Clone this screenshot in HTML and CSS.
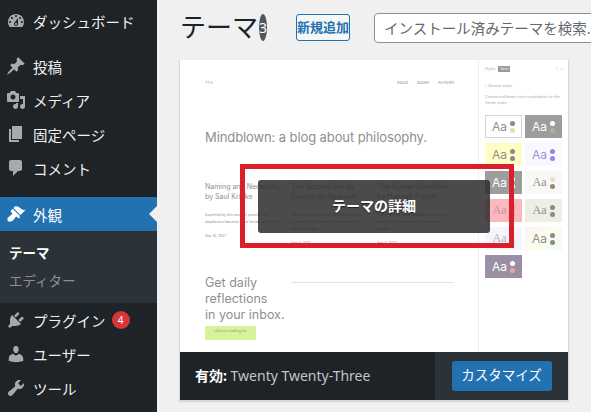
FILE: index.html
```html
<!DOCTYPE html>
<html lang="ja">
<head>
    <meta charset="utf-8">
    <title>テーマ</title>
    <link rel="stylesheet" href="styles.css">
</head>
<body>
    <div class="sidebar">
        <a class="menu-item first">
            <svg class="menu-icon" viewBox="0 0 20 20"><path d="M3.76 16h12.48c1.1-1.37 1.76-3.11 1.76-5 0-4.42-3.58-8-8-8s-8 3.58-8 8c0 1.89.66 3.63 1.76 5zM10 4c.55 0 1 .45 1 1s-.45 1-1 1-1-.45-1-1 .45-1 1-1zM6 6c.55 0 1 .45 1 1s-.45 1-1 1-1-.45-1-1 .45-1 1-1zm8 0c.55 0 1 .45 1 1s-.45 1-1 1-1-.45-1-1 .45-1 1-1zm-5.37 5.55L12 7v6c0 1.1-.9 2-2 2s-2-.9-2-2c0-.57.24-1.08.63-1.45zM4 10c.55 0 1 .45 1 1s-.45 1-1 1-1-.45-1-1 .45-1 1-1zm12 0c.55 0 1 .45 1 1s-.45 1-1 1-1-.45-1-1 .45-1 1-1zm-5 3c0-.55-.45-1-1-1s-1 .45-1 1 .45 1 1 1 1-.45 1-1z"/></svg>
            <span>ダッシュボード</span>
        </a>
        <a class="menu-item group-start">
            <svg class="menu-icon" viewBox="0 0 20 20"><path d="M10.44 3.02l1.82-1.82 6.36 6.35-1.83 1.82c-1.05-.68-2.48-.57-3.41.36l-.75.75c-.92.93-1.04 2.35-.35 3.41l-1.83 1.82-2.41-2.41-2.8 2.79c-.42.42-3.38 2.71-3.8 2.29s1.86-3.39 2.28-3.81l2.79-2.79L4.1 9.36l1.83-1.82c1.05.69 2.48.57 3.4-.36l.75-.75c.93-.92 1.05-2.35.36-3.41z"/></svg>
            <span>投稿</span>
        </a>
        <a class="menu-item">
            <svg class="menu-icon" viewBox="0 0 20 20"><path d="M13 11V4c0-.55-.45-1-1-1h-1.67L9 1H5L3.67 3H2c-.55 0-1 .45-1 1v7c0 .55.45 1 1 1h10c.55 0 1-.45 1-1zM7 4.5c1.38 0 2.5 1.12 2.5 2.5S8.38 9.5 7 9.5 4.5 8.38 4.5 7 5.62 4.5 7 4.5zM14 6h5v10.5c0 1.38-1.12 2.5-2.5 2.5S14 17.88 14 16.5s1.12-2.5 2.5-2.5c.17 0 .34.02.5.05V9h-3V6zm-4 8.05V13h2v3.5c0 1.38-1.12 2.5-2.5 2.5S7 17.88 7 16.5 8.12 14 9.5 14c.17 0 .34.02.5.05z"/></svg>
            <span>メディア</span>
        </a>
        <a class="menu-item">
            <svg class="menu-icon" viewBox="0 0 20 20"><path d="M6 15V2h10v13H6zm-1 1h8v2H3V5h2v11z"/></svg>
            <span>固定ページ</span>
        </a>
        <a class="menu-item">
            <svg class="menu-icon" viewBox="0 0 20 20"><path d="M5 2h9c1.1 0 2 .9 2 2v7c0 1.1-.9 2-2 2h-2l-5 5v-5H5c-1.1 0-2-.9-2-2V4c0-1.1.9-2 2-2z"/></svg>
            <span>コメント</span>
        </a>
        <a class="menu-item current">
            <svg class="menu-icon" viewBox="0 0 20 20"><path d="M14.48 11.06L7.41 3.99l1.5-1.5c.5-.56 2.3-.47 3.51.32 1.21.8 1.43 1.28 2.91 2.1 1.18.64 2.45 1.26 4.45.85zm-.71.71L6.7 4.7 4.93 6.47c-.39.39-.39 1.02 0 1.41l1.06 1.06c.39.39.39 1.03 0 1.42-.6.6-1.43 1.11-2.21 1.69-.35.26-.7.53-1.01.84C1.43 13.23.78 15.78 2 17s3.78.56 5.14-.78c.31-.31.58-.66.84-1.01.58-.78 1.09-1.61 1.69-2.21.39-.39 1.02-.39 1.41 0l1.06 1.06c.39.39 1.02.39 1.41 0z"/></svg>
            <span>外観</span>
        </a>
        <div class="submenu">
            <a class="submenu-item active">テーマ</a>
            <a class="submenu-item">エディター</a>
        </div>
        <a class="menu-item">
            <svg class="menu-icon" viewBox="0 0 20 20"><path d="M13.11 4.36L9.87 7.6 8 5.73l3.24-3.24c.35-.34 1.05-.2 1.56.32.52.51.66 1.21.31 1.55zm-8 1.77l.91-1.12 9.01 9.01-1.19.84c-.71.71-2.63 1.16-3.82 1.16H6.14L4.9 17.26c-.59.59-1.54.59-2.12 0-.59-.58-.59-1.53 0-2.12l1.24-1.24v-3.88c0-1.13.4-3.19 1.09-3.89zm7.26 3.97l3.24-3.24c.34-.35 1.04-.21 1.55.31.52.51.66 1.21.31 1.55l-3.24 3.25z"/></svg>
            <span>プラグイン</span>
            <span class="update-count">4</span>
        </a>
        <a class="menu-item">
            <svg class="menu-icon" viewBox="0 0 20 20"><path d="M10 9.25c-2.27 0-2.73-3.44-2.73-3.44C7 4.02 7.82 2 9.97 2c2.16 0 2.98 2.02 2.71 3.81 0 0-.41 3.44-2.68 3.44zm0 2.57L12.72 10c2.39 0 4.52 2.33 4.52 4.53v2.49s-3.65 1.13-7.24 1.13c-3.65 0-7.24-1.13-7.24-1.13v-2.49c0-2.25 1.94-4.48 4.47-4.48z"/></svg>
            <span>ユーザー</span>
        </a>
        <a class="menu-item">
            <svg class="menu-icon" viewBox="0 0 20 20"><path d="M16.68 9.77c-1.34 1.34-3.3 1.67-4.95.99l-5.41 6.52c-.99.99-2.59.99-3.58 0s-.99-2.59 0-3.57l6.52-5.42c-.68-1.65-.35-3.61.99-4.95 1.28-1.28 3.12-1.62 4.72-1.06l-2.89 2.89 2.82 2.82 2.86-2.87c.53 1.58.18 3.39-1.08 4.67z"/></svg>
            <span>ツール</span>
        </a>
    </div>

    <div class="content">
        <div class="page-head">
            <h1 class="page-title">テーマ</h1>
            <span class="title-count">3</span>
            <a class="add-new">新規追加</a>
            <div class="search-box">インストール済みテーマを検索...</div>
        </div>

        <div class="theme-card">
            <div class="theme-shot">
                <div class="shot-main">
                    <div class="shot-nav">
                        <span class="shot-logo">TT3</span>
                        <span class="shot-links"><span>About</span><span>Books</span><span>All Posts</span></span>
                    </div>
                    <div class="shot-tagline">Mindblown: a blog about philosophy.</div>
                    <div class="shot-posts">
                        <div class="shot-post">
                            <div class="post-title">Naming and Necessity by Saul Kripke</div>
                            <p class="post-text">Inspirited by this wind of promise, my daydreams become more fervent and vivid.</p>
                            <div class="post-date">Sep 10, 2021</div>
                        </div>
                        <div class="shot-post">
                            <div class="post-title">The Second Sex by Simone de Beauvoir</div>
                            <p class="post-text">I feel a cold northern breeze play upon my cheeks, which braces my nerves and fills me with delight.</p>
                            <div class="post-date">Sep 4, 2021</div>
                        </div>
                        <div class="shot-post">
                            <div class="post-title">The Human Condition by Hannah Arendt</div>
                            <p class="post-text">I try in vain to be persuaded that the pole is anything but the region of beauty and delight.</p>
                            <div class="post-date">Sep 4, 2021</div>
                        </div>
                    </div>
                    <div class="shot-signup">
                        <div class="signup-text">Get daily<br>reflections<br>in your inbox.</div>
                        <div class="signup-rule"></div>
                    </div>
                    <span class="signup-btn">Join our mailing list</span>
                </div>

                <div class="shot-styles">
                    <div class="styles-head"><span>Styles</span><span class="beta">Beta</span><span class="styles-close">⋮ &nbsp;×</span></div>
                    <div class="styles-back">‹ &nbsp;Browse styles</div>
                    <p class="styles-note">Choose a different style combination for the theme styles</p>
                    <div class="styles-grid">
                        <div class="swatch sw-white">Aa<i class="dots"><b class="d-grey"></b><b class="d-lime"></b></i></div>
                        <div class="swatch sw-grey">Aa<i class="dots"><b class="d-white"></b><b class="d-tan"></b></i></div>
                        <div class="swatch sw-yellow">Aa<i class="dots"><b class="d-grey"></b><b class="d-grey"></b></i></div>
                        <div class="swatch sw-lilac">Aa<i class="dots"><b class="d-violet"></b><b class="d-violet"></b></i></div>
                        <div class="swatch sw-grey">Aa<i class="dots"><b class="d-white"></b><b class="d-white"></b></i></div>
                        <div class="swatch sw-cream serif">Aa<i class="dots"><b class="d-sand"></b><b class="d-grey"></b></i></div>
                        <div class="swatch sw-pink serif">Aa<i class="dots"><b class="d-rose"></b><b class="d-rose"></b></i></div>
                        <div class="swatch sw-sage serif">Aa<i class="dots"><b class="d-grey"></b><b class="d-grey"></b></i></div>
                        <div class="swatch sw-pale serif">Aa<i class="dots"><b class="d-pale"></b><b class="d-pale"></b></i></div>
                        <div class="swatch sw-rainbow">Aa<i class="dots"><b class="d-grey"></b><b class="d-grey"></b></i></div>
                        <div class="swatch sw-plum">Aa<i class="dots"><b class="d-white"></b><b class="d-salmon"></b></i></div>
                    </div>
                </div>

                <div class="highlight-box"></div>
                <div class="theme-details">テーマの詳細</div>
            </div>

            <div class="theme-bar">
                <div class="theme-name"><strong>有効:</strong> Twenty Twenty-Three</div>
                <div class="theme-actions"><a class="customize">カスタマイズ</a></div>
            </div>
        </div>
    </div>
</body>
</html>
```

FILE: styles.css
```css
html, body {
    height: 412px;
    overflow: hidden;
}
body {
    margin: 0;
    display: flex;
    background: #f0f0f1;
    color: #1d2327;
    font-family: "Noto Sans", "Noto Sans CJK JP", sans-serif;
}

/* admin menu */
.sidebar {
    width: 157px;
    flex: none;
    background: #1d2327;
    padding-top: 4px;
    box-sizing: border-box;
}
.menu-item {
    display: flex;
    align-items: center;
    height: 34px;
    color: #f0f0f1;
    font-size: 14.5px;
    position: relative;
}
.group-start {
    margin-top: 11px;
}
.menu-icon {
    width: 20px;
    height: 20px;
    margin: 0 7px 0 6px;
    fill: #a7aaad;
    flex: none;
}
.current {
    margin-top: 12px;
    background: #2271b1;
    color: #fff;
}
.current .menu-icon {
    fill: #fff;
}
.current::after {
    content: "";
    position: absolute;
    right: 0;
    top: 9px;
    border: 8px solid transparent;
    border-right-color: #f0f0f1;
}
.submenu {
    height: 72px;
    box-sizing: border-box;
    padding-top: 8px;
    background: #2c3338;
}
.submenu-item {
    display: block;
    height: 28px;
    line-height: 28px;
    padding-left: 9px;
    font-size: 13.5px;
    color: #8c8f94;
}
.submenu-item.active {
    color: #fff;
    font-weight: 700;
}
.update-count {
    width: 18px;
    height: 18px;
    margin-left: 6px;
    border-radius: 50%;
    background: #d63638;
    color: #fff;
    font-size: 10px;
    line-height: 18px;
    text-align: center;
}

/* main column */
.content {
    flex: 1;
    padding: 13px 0 0 23px;
    min-width: 0;
}
.page-head {
    display: flex;
    align-items: center;
    height: 29px;
    white-space: nowrap;
}
.page-title {
    margin: 0;
    font-size: 26px;
    font-weight: 400;
    line-height: 29px;
}
.title-count {
    width: 28px;
    height: 27px;
    margin-left: 1px;
    border-radius: 50%;
    background: #50575e;
    color: #fff;
    font-size: 14px;
    line-height: 27px;
    text-align: center;
}
.add-new {
    width: 70px;
    height: 27px;
    margin-left: 29px;
    box-sizing: border-box;
    border: 1px solid #2271b1;
    border-radius: 3px;
    background: #f6f7f7;
    color: #2271b1;
    font-size: 13px;
    font-weight: 700;
    line-height: 25px;
    text-align: center;
}
.search-box {
    flex: none;
    width: 280px;
    height: 30px;
    margin-left: 24px;
    padding-left: 9px;
    box-sizing: border-box;
    border: 1px solid #8c8f94;
    border-radius: 4px;
    background: #fff;
    color: #646970;
    font-size: 14.5px;
    line-height: 28px;
}

/* theme card */
.theme-card {
    width: 388px;
    margin-top: 18px;
    box-shadow: 0 1px 1px 1px rgba(0, 0, 0, 0.1);
}
.theme-shot {
    position: relative;
    height: 292px;
    display: flex;
    background: #fff;
    overflow: hidden;
}
.shot-main {
    width: 298px;
    flex: none;
    box-sizing: border-box;
    padding: 20px 24px 0 25px;
    color: #8f8f8f;
    font-family: Inter, "Liberation Sans", sans-serif;
}
.shot-nav {
    display: flex;
    justify-content: space-between;
    font-size: 4px;
    line-height: 6px;
}
.shot-links {
    display: flex;
    gap: 9px;
}
.shot-tagline {
    margin-top: 42px;
    font-size: 13px;
    line-height: 18px;
    letter-spacing: -0.1px;
    white-space: nowrap;
}
.shot-posts {
    display: flex;
    gap: 10px;
    margin-top: 36px;
}
.shot-post {
    width: 76px;
    flex: none;
}
.post-title {
    font-size: 7px;
    line-height: 10px;
}
.post-text {
    margin: 10px 0 0;
    font-size: 3.6px;
    line-height: 7px;
}
.post-date {
    margin-top: 7px;
    font-size: 3.5px;
    line-height: 6px;
}
.shot-signup {
    display: flex;
    gap: 8px;
    margin-top: 29px;
}
.signup-text {
    width: 78px;
    flex: none;
    font-size: 12.5px;
    line-height: 16px;
    white-space: nowrap;
}
.signup-rule {
    width: 163px;
    height: 1px;
    margin-top: 7px;
    background: #e2e2e2;
}
.signup-btn {
    display: block;
    width: 51px;
    height: 14px;
    margin-top: 3px;
    background: #d6f29a;
    color: #8a9a6a;
    font-size: 3.5px;
    line-height: 10px;
    text-align: center;
}

/* style picker inside the screenshot */
.shot-styles {
    flex: 1;
    box-sizing: border-box;
    padding: 5px 5px 0 6px;
    border-left: 1px solid #f0f0f0;
    color: #a8a8a8;
    font-family: Inter, "Liberation Sans", sans-serif;
    font-size: 3.6px;
}
.styles-head {
    display: flex;
    align-items: center;
    gap: 3px;
    height: 8px;
}
.beta {
    padding: 1px 2px;
    background: #9a9a9a;
    color: #eee;
}
.styles-close {
    margin-left: auto;
}
.styles-back {
    margin-top: 10px;
    line-height: 6px;
}
.styles-note {
    margin: 5px 0 0;
    line-height: 6px;
}
.styles-grid {
    display: grid;
    grid-template-columns: 37px 37px;
    grid-auto-rows: 23px;
    gap: 5px 3px;
    margin-top: 9px;
}
.swatch {
    display: flex;
    align-items: center;
    justify-content: center;
    gap: 3px;
    font-size: 12px;
    color: #8f8f8f;
}
.swatch.serif {
    font-family: "Liberation Serif", serif;
}
.dots {
    display: flex;
    flex-direction: column;
    gap: 2px;
}
.dots b {
    width: 5px;
    height: 5px;
    border-radius: 50%;
}
.sw-white { background: #fff; box-shadow: inset 0 0 0 1px #d4d4d4; }
.sw-grey { background: #9d9d9d; color: #fff; }
.sw-yellow { background: #fdfdc4; }
.sw-lilac { background: #f9f8fe; color: #9a8fe0; }
.sw-cream { background: #faf8f6; }
.sw-pink { background: #fbb9bf; color: #c98f95; }
.sw-sage { background: #eeeee5; }
.sw-pale { background: #f5f5fb; color: #b0b0b8; }
.sw-rainbow { background: linear-gradient(135deg, #fdf0f4, #fdfdec 50%, #effaf6); }
.sw-plum { background: #9b8fa3; color: #fff; }
.d-grey { background: #8a8a86; }
.d-lime { background: #c8eea0; }
.d-white { background: #fff; }
.d-tan { background: #b3ad9c; }
.d-violet { background: #9386e6; }
.d-sand { background: #ecdcc4; }
.d-rose { background: #e79aa2; }
.d-pale { background: #ebebf4; }
.d-salmon { background: #e8a79e; }

/* overlays on the screenshot */
.highlight-box {
    position: absolute;
    left: 60px;
    top: 104px;
    width: 274px;
    height: 84px;
    box-sizing: border-box;
    border: 5px solid #d9202a;
}
.theme-details {
    position: absolute;
    left: 78px;
    top: 120px;
    width: 232px;
    height: 53px;
    border-radius: 3px;
    background: rgba(44, 44, 44, 0.85);
    color: #fff;
    font-size: 14px;
    font-weight: 700;
    line-height: 51px;
    text-align: center;
    text-shadow: 0 1px 1px rgba(0, 0, 0, 0.6);
}

/* bottom bar */
.theme-bar {
    display: flex;
    height: 48px;
    background: #1d2327;
    color: #f0f0f1;
}
.theme-name {
    width: 255px;
    flex: none;
    box-sizing: border-box;
    padding-left: 15px;
    color: #c3c4c7;
    font-size: 14px;
    line-height: 48px;
    white-space: nowrap;
}
.theme-name strong {
    color: #fff;
}
.theme-actions {
    flex: 1;
    display: flex;
    align-items: center;
    justify-content: center;
    background: #2c3338;
}
.customize {
    width: 100px;
    height: 30px;
    border-radius: 3px;
    background: #2271b1;
    color: #fff;
    font-size: 13.5px;
    line-height: 29px;
    text-align: center;
}
```
